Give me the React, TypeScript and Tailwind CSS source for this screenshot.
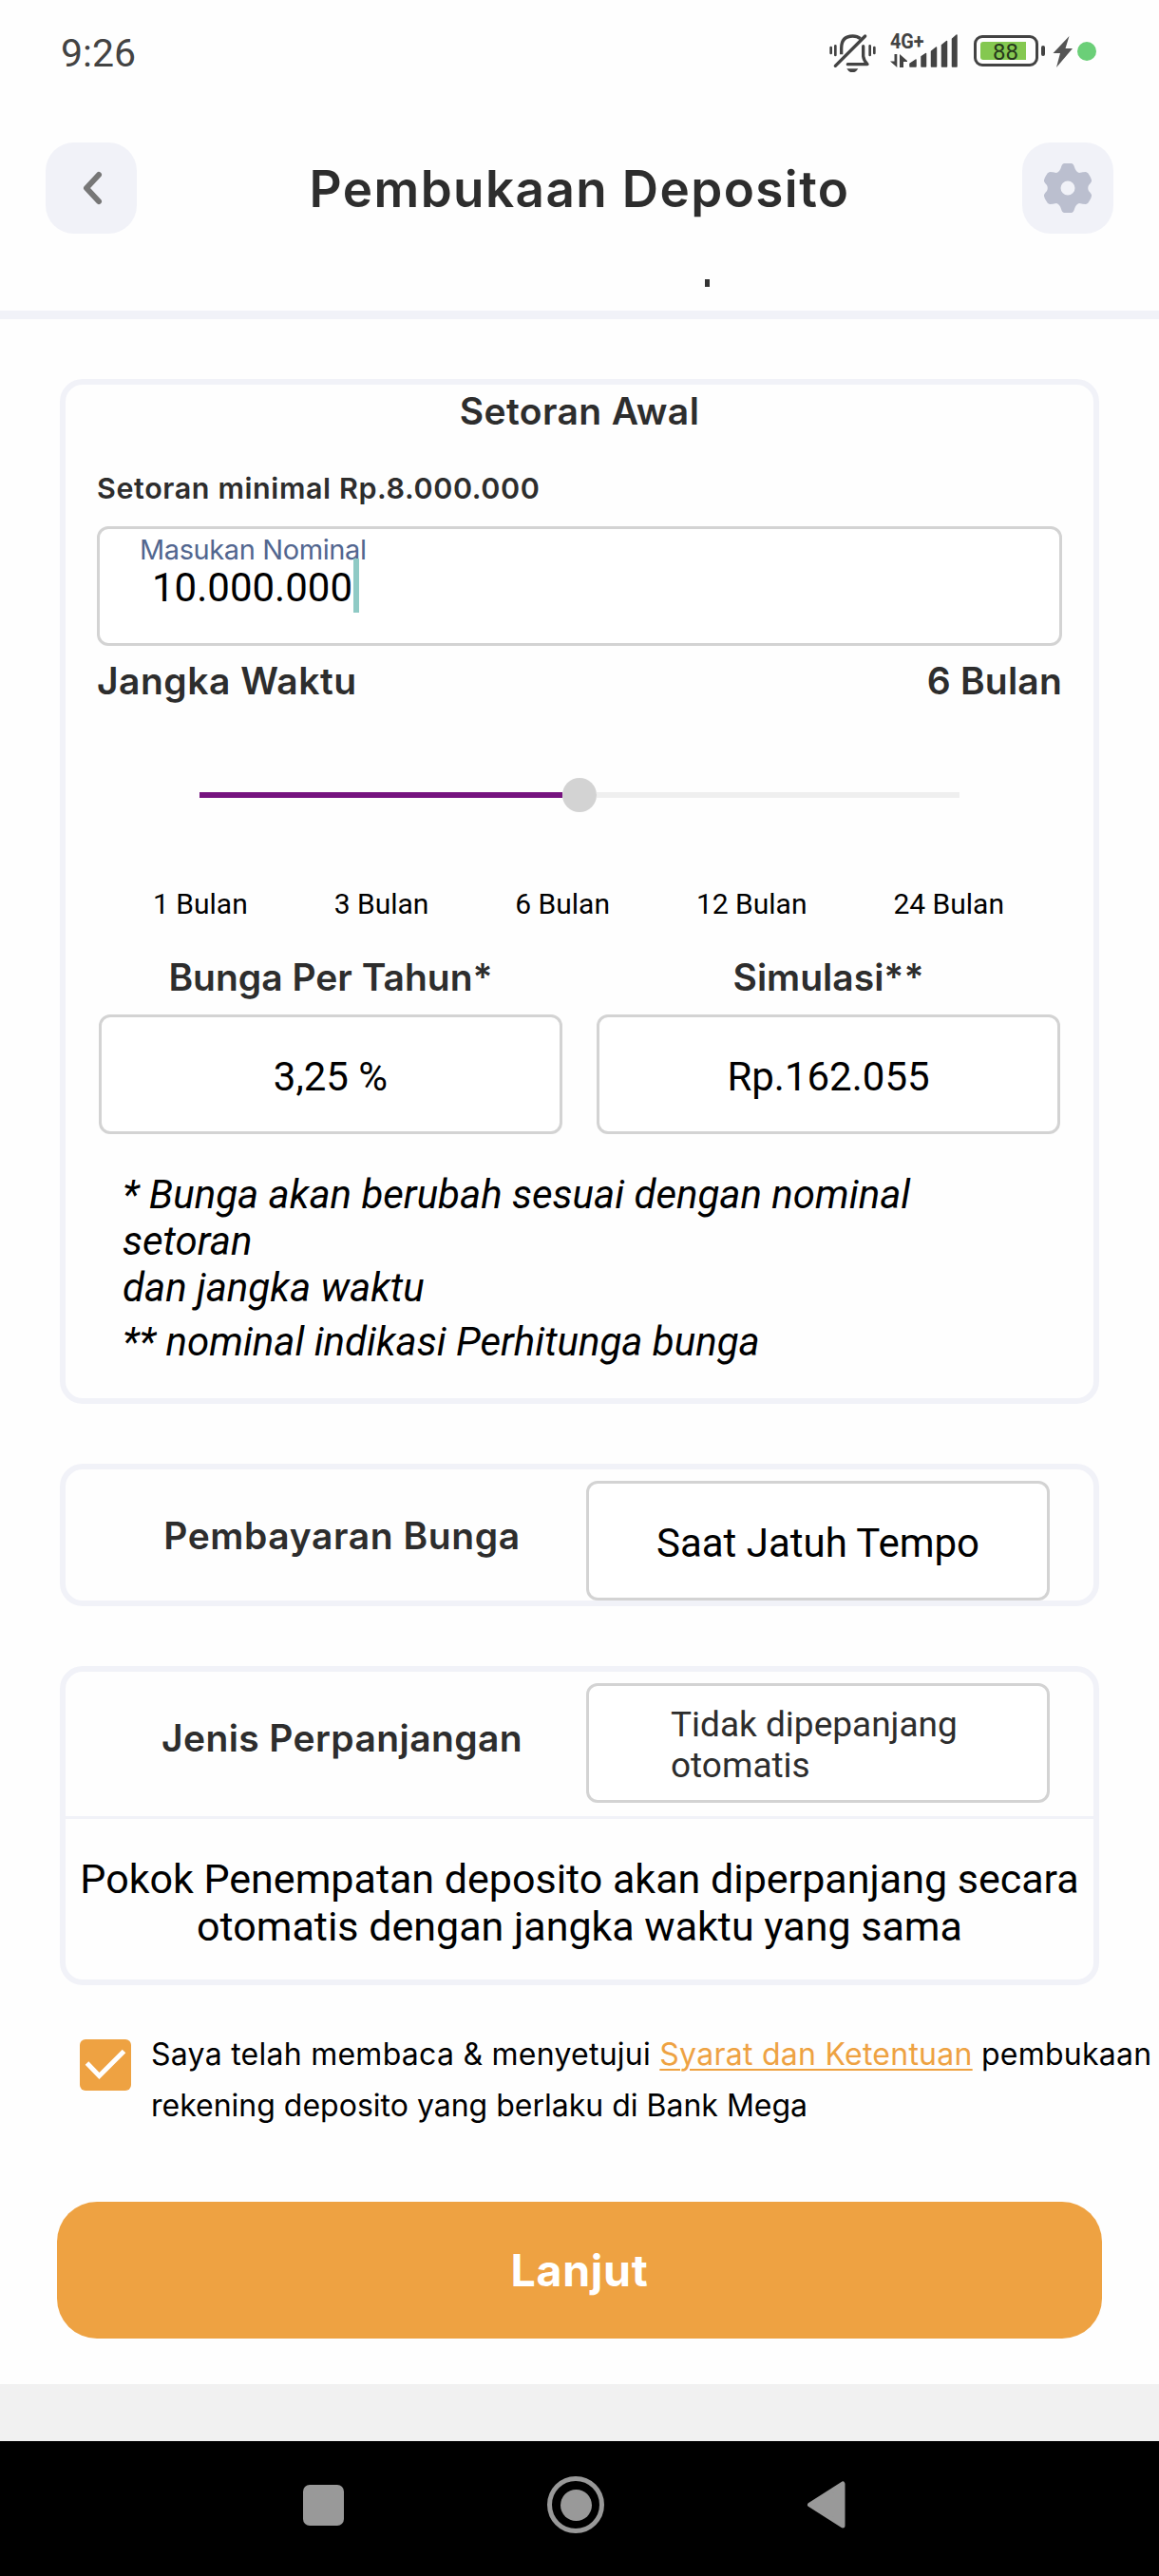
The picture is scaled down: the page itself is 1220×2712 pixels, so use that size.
import React from "react";

const heading = "font-['Inter'] font-semibold text-[#2d2d2d] whitespace-nowrap";
const field = "box-border h-[126px] rounded-xl border-3 border-[#d3d3d3] bg-white";

function BellOff() {
  return (
    <svg className="h-[42px] w-[50px]" viewBox="0 0 150 126" fill="none" stroke="#434343" strokeLinecap="round" strokeLinejoin="round">
      <path d="M38 70 V50 Q38 12 74 12 Q88 12 98 20" strokeWidth="10" strokeLinecap="butt" />
      <path d="M107 44 L107 76 Q109 90 120 101 L58 101" strokeWidth="10" />
      <path d="M19 106 L113 12" strokeWidth="10" />
      <path d="M55 115 H91 Q84 127 73 127 Q62 127 55 115Z" fill="#434343" stroke="none" />
      <path d="M5 48 V66 M19 43 V72 M128 43 V72 M142 48 V66" strokeWidth="8" />
    </svg>
  );
}

function DataArrows() {
  return (
    <svg className="h-[14px] w-[18px]" viewBox="0 0 18 14" fill="#434343">
      <path d="M4.500 0H7.300V14L0 7.500H4.500Z" />
      <path d="M10 0L18 7V8H14V14H10Z" />
    </svg>
  );
}

function SignalBars() {
  return (
    <svg className="h-[36px] w-[54px]" viewBox="0 0 54 36" fill="#434343" stroke="#434343" strokeWidth="1.5" strokeLinejoin="round">
      <path d="M1 34V31L7 27V34Z" />
      <path d="M13 34V23.500L17.500 20.500V34Z" />
      <path d="M23.500 34V18L28.500 14V34Z" />
      <path d="M34.500 34V11.500L39.500 7.500V34Z" />
      <path d="M45.500 34V5L50 1V34Z" />
    </svg>
  );
}

function StatusBar() {
  return (
    <div className="flex h-[110px] items-start pl-[64px]">
      <div className="mt-[36px] h-10 w-[90px] whitespace-nowrap font-['Roboto'] text-[41px] leading-10 text-[#434343]">9:26</div>
      <div className="ml-[719px] mt-[34px]"><BellOff /></div>
      <div className="ml-[14px] mt-[35px] w-[20px]">
        <div className="h-[17px] origin-left scale-x-90 whitespace-nowrap font-['Roboto'] text-[22px] font-bold leading-[17px] text-[#434343]">4G+</div>
        <div className="mt-[5px]"><DataArrows /></div>
      </div>
      <div className="mt-[36px]"><SignalBars /></div>
      <div className="ml-[14px] mt-[37px] flex h-[33px] w-[68px] rounded-[9px] border-[3px] border-[#434343] p-[4px]">
        <div className="relative h-[19px] w-[48px] rounded-l-[3px] bg-[#84c850]">
          <span className="absolute left-[13px] top-[1px] font-['Roboto'] text-[24px] leading-[20px] text-[#26371b]">88</span>
        </div>
      </div>
      <div className="ml-[3px] mt-[48px] h-[11px] w-[4px] rounded-sm bg-[#434343]" />
      <svg className="ml-[8px] mt-[38px] h-[33px] w-[22px]" viewBox="0 0 22 33" fill="#555">
        <path d="M17.500 0L0.500 18H8L4 33L21 13H13.500Z" />
      </svg>
      <div className="ml-[4px] mt-[44px] size-5 rounded-full bg-[#6bcf78]" />
    </div>
  );
}

function Header() {
  return (
    <div className="flex h-[217px] justify-between px-12 pt-10">
      <div className="flex size-24 items-center justify-center rounded-[30px] bg-[#f1f2f8]">
        <svg className="size-10" viewBox="0 0 40 40" fill="none" stroke="#777" strokeWidth="6" strokeLinecap="round" strokeLinejoin="round">
          <path d="M28 6L15 20L28 34" />
        </svg>
      </div>
      <div className="flex flex-col">
        <h1 className={`${heading} h-[98px] text-[53px] leading-[98px] tracking-[1.4px]`}>Pembukaan Deposito</h1>
        <div className="ml-[416px] mt-[46px] h-[8px] w-[5px] bg-[#333]" />
      </div>
      <div className="flex size-24 items-center justify-center rounded-[30px] bg-[#f1f2f8]">
        <svg className="h-[52px] w-[50px]" viewBox="0 0 50 52" fill="#bbbfcf" fillRule="evenodd">
          <path d="M21.5 0H28.5Q31 0 32 4Q33.500 9 37 10Q41 9 44 9Q46.500 9.500 48 13Q50.500 17 50 19Q49 21 47 23Q45.500 26 47 29Q49 31 50 33Q50.500 35 48 39Q46.500 42.500 44 43Q41 43 37 42Q33.500 43 32 48Q31 52 28.500 52H21.500Q19 52 18 48Q16.500 43 13 42Q9 43 6 43Q3.500 42.500 2 39Q-.5 35 0 33Q1 31 3 29Q4.500 26 3 23Q1 21 0 19Q-.5 17 2 13Q3.500 9.500 6 9Q9 9 13 10Q16.500 9 18 4Q19 0 21.500 0ZM25 18.500A7.500 7.500 0 1 0 25 33.500A7.500 7.500 0 1 0 25 18.500Z" />
        </svg>
      </div>
    </div>
  );
}

function DepositCard() {
  return (
    <section className="mx-[63px] mt-[63px] h-[1079px] rounded-3xl border-6 border-[#f1f2f8]">
      <h2 className={`${heading} h-14 text-center text-[39px] leading-14 tracking-[0.4px]`}>Setoran Awal</h2>
      <div className="px-[33px]">
        <p className={`${heading} mt-[33px] h-10 text-[30.5px] leading-10 tracking-[0.6px]`}>Setoran minimal Rp.8.000.000</p>
        <div className={`${field} relative mt-5`}>
          <span className="absolute left-[42px] top-[4px] whitespace-nowrap font-['Inter'] text-[29px] leading-[36px] tracking-[-0.4px] text-[#52668f]">Masukan Nominal</span>
          <span className="absolute left-[55px] top-[38px] font-['Roboto'] text-[42px] leading-[48px] text-black">10.000.000</span>
          <span className="absolute left-[267px] top-[31px] h-[57px] w-[6px] bg-[#8fcac5]" />
        </div>
        <div className="mt-[9px] flex h-14 justify-between">
          <span className={`${heading} text-[39px] leading-14 tracking-[0.5px]`}>Jangka Waktu</span>
          <span className={`${heading} text-[39px] leading-14 tracking-[0.2px]`}>6 Bulan</span>
        </div>
      </div>
      <div className="mx-[141px] mt-[74px] flex h-9 items-center">
        <div className="h-[6px] flex-1 bg-[#76137f]" />
        <div className="size-9 rounded-full bg-[#d3d3d3]" />
        <div className="h-[6px] flex-1 bg-[#efefef]" />
      </div>
      <div className="ml-[92px] mr-[94px] mt-[77px] flex h-10 justify-between whitespace-nowrap font-['Roboto'] text-[30px] leading-10 text-black">
        <span>1 Bulan</span>
        <span>3 Bulan</span>
        <span>6 Bulan</span>
        <span>12 Bulan</span>
        <span>24 Bulan</span>
      </div>
      <div className="mt-[29px] flex gap-9 px-[35px]">
        <div className="flex-1">
          <h3 className={`${heading} h-14 text-center text-[39px] leading-14`}>Bunga Per Tahun*</h3>
          <div className={`${field} mt-[11px] text-center font-['Roboto'] text-[42px] leading-[126px] text-black`}>3,25 %</div>
        </div>
        <div className="flex-1">
          <h3 className={`${heading} h-14 text-center text-[39px] leading-14`}>Simulasi**</h3>
          <div className={`${field} mt-[11px] text-center font-['Roboto'] text-[42px] leading-[126px] text-black`}>Rp.162.055</div>
        </div>
      </div>
      <div className="ml-[60px] mt-[39px] whitespace-nowrap font-['Roboto'] text-[42px] italic leading-[49px] text-black">
        <p>* Bunga akan berubah sesuai dengan nominal<br />setoran<br />dan jangka waktu</p>
        <p className="mt-2">** nominal indikasi Perhitunga bunga</p>
      </div>
    </section>
  );
}

function PaymentCard() {
  return (
    <section className="mx-[63px] mt-[63px] flex h-[150px] rounded-3xl border-6 border-[#f1f2f8]">
      <div className={`${heading} w-[548px] pl-[34px] pt-[42px] text-center text-[39px] leading-[56px] tracking-[0.6px]`}>
        Pembayaran Bunga
      </div>
      <div className={`${field} mt-3 w-[488px] text-center font-['Roboto'] text-[42px] leading-[125px] text-black`}>Saat Jatuh Tempo</div>
    </section>
  );
}

function ExtensionCard() {
  return (
    <section className="mx-[63px] mt-[63px] h-[336px] rounded-3xl border-6 border-[#f1f2f8]">
      <div className="flex h-[155px] border-b-3 border-[#f1f2f8]">
        <div className={`${heading} w-[548px] pl-[34px] pt-[42px] text-center text-[39px] leading-[56px] tracking-[0.4px]`}>
          Jenis Perpanjangan
        </div>
        <div className={`${field} mt-3 w-[488px] whitespace-nowrap pl-[86px] pt-[19px] font-['Roboto'] text-[37px] leading-[43px] text-[#2d2d2d]`}>
          Tidak dipepanjang<br />otomatis
        </div>
      </div>
      <p className="mt-[38px] whitespace-nowrap text-center font-['Roboto'] text-[43px] leading-[50px] text-black">
        Pokok Penempatan deposito akan diperpanjang secara<br />otomatis dengan jangka waktu yang sama
      </p>
    </section>
  );
}

function Consent() {
  return (
    <div className="mt-[57px] flex h-[111px] shrink-0 pl-[84px]">
      <svg className="size-[54px] shrink-0 rounded-[6px] bg-[#eea242]" viewBox="0 0 54 54" fill="none" stroke="#fff" strokeWidth="5">
        <path d="M7.500 25L20.500 38.500L46.500 12.500" />
      </svg>
      <p className="-mt-[11px] ml-[21px] whitespace-nowrap font-['Inter'] text-[32px] leading-[54px] text-black">
        <span className="tracking-[0.26px]">Saya telah membaca &amp; menyetujui <span className="text-[#eea242] underline decoration-2 underline-offset-4">Syarat dan Ketentuan</span> pembukaan</span><br />
        rekening deposito yang berlaku di Bank Mega
      </p>
    </div>
  );
}

function NavBar() {
  return (
    <div className="flex h-[142px] shrink-0 items-center bg-black pb-[8px]">
      <div className="ml-[319px] size-[43px] rounded-[7px] bg-[#999]" />
      <div className="ml-[214px] flex size-[60px] items-center justify-center rounded-full border-[5px] border-[#999]">
        <div className="size-[33px] rounded-full bg-[#999]" />
      </div>
      <svg className="ml-[213px] h-[50px] w-[42px]" viewBox="0 0 42 50" fill="#999" stroke="#999" strokeWidth="5" strokeLinejoin="round">
        <path d="M3.500 25L38 3V47Z" />
      </svg>
    </div>
  );
}

export default function App() {
  return (
    <div className="flex h-[2712px] w-[1220px] flex-col overflow-hidden bg-[#fefefe]">
      <StatusBar />
      <Header />
      <div className="h-[9px] bg-[#f1f2f8]" />
      <DepositCard />
      <PaymentCard />
      <ExtensionCard />
      <Consent />
      <button className="mx-[60px] mt-[60px] h-[144px] shrink-0 rounded-[42px] bg-[#eea242] text-center font-['Inter'] text-[46.5px] font-bold leading-[144px] tracking-[0.7px] text-white">Lanjut</button>
      <div className="mt-12 h-[60px] shrink-0 bg-[#f1f1f1]" />
      <NavBar />
    </div>
  );
}
